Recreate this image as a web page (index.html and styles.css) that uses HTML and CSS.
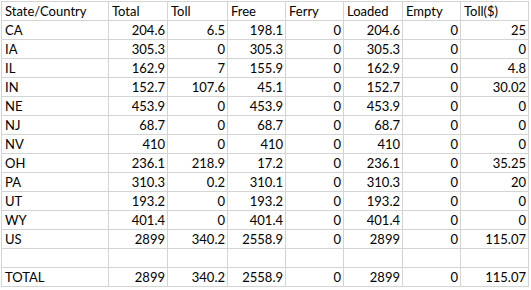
FILE: index.html
```html
<!DOCTYPE html>
<html lang="en">
<head>
  <meta charset="UTF-8">
  <title>Mileage by State</title>
  <link rel="stylesheet" href="styles.css">
</head>
<body>
  <table class="sheet">
    <colgroup>
      <col class="c-state">
      <col class="c-num">
      <col class="c-num2">
      <col class="c-num3">
      <col class="c-num3">
      <col class="c-num">
      <col class="c-num3">
      <col class="c-last">
    </colgroup>
    <thead>
      <tr>
        <th>State/Country</th>
        <th>Total</th>
        <th>Toll</th>
        <th>Free</th>
        <th>Ferry</th>
        <th>Loaded</th>
        <th>Empty</th>
        <th>Toll($)</th>
      </tr>
    </thead>
    <tbody>
      <tr><td>CA</td><td>204.6</td><td>6.5</td><td>198.1</td><td>0</td><td>204.6</td><td>0</td><td>25</td></tr>
      <tr><td>IA</td><td>305.3</td><td>0</td><td>305.3</td><td>0</td><td>305.3</td><td>0</td><td>0</td></tr>
      <tr><td>IL</td><td>162.9</td><td>7</td><td>155.9</td><td>0</td><td>162.9</td><td>0</td><td>4.8</td></tr>
      <tr><td>IN</td><td>152.7</td><td>107.6</td><td>45.1</td><td>0</td><td>152.7</td><td>0</td><td>30.02</td></tr>
      <tr><td>NE</td><td>453.9</td><td>0</td><td>453.9</td><td>0</td><td>453.9</td><td>0</td><td>0</td></tr>
      <tr><td>NJ</td><td>68.7</td><td>0</td><td>68.7</td><td>0</td><td>68.7</td><td>0</td><td>0</td></tr>
      <tr><td>NV</td><td>410</td><td>0</td><td>410</td><td>0</td><td>410</td><td>0</td><td>0</td></tr>
      <tr><td>OH</td><td>236.1</td><td>218.9</td><td>17.2</td><td>0</td><td>236.1</td><td>0</td><td>35.25</td></tr>
      <tr><td>PA</td><td>310.3</td><td>0.2</td><td>310.1</td><td>0</td><td>310.3</td><td>0</td><td>20</td></tr>
      <tr><td>UT</td><td>193.2</td><td>0</td><td>193.2</td><td>0</td><td>193.2</td><td>0</td><td>0</td></tr>
      <tr><td>WY</td><td>401.4</td><td>0</td><td>401.4</td><td>0</td><td>401.4</td><td>0</td><td>0</td></tr>
      <tr><td>US</td><td>2899</td><td>340.2</td><td>2558.9</td><td>0</td><td>2899</td><td>0</td><td>115.07</td></tr>
      <tr class="blank"><td></td><td></td><td></td><td></td><td></td><td></td><td></td><td></td></tr>
      <tr><td>TOTAL</td><td>2899</td><td>340.2</td><td>2558.9</td><td>0</td><td>2899</td><td>0</td><td>115.07</td></tr>
    </tbody>
  </table>
</body>
</html>
```

FILE: styles.css
```css
/* Sheet layout */
body {
  margin: 0;
  background: #fff;
  font-family: 'Lato', 'Liberation Sans', sans-serif;
  font-size: 13px;
  color: #000;
}

.sheet {
  margin: 1px 0 0 1px;
  width: 527px;
  table-layout: fixed;
  border-collapse: collapse;
  border: 1px solid #a0a0a0;
}

.c-state { width: 107px; }
.c-num   { width: 59px; }
.c-num2  { width: 60px; }
.c-num3  { width: 58px; }
.c-last  { width: 68px; }

/* Cells */
.sheet th,
.sheet td {
  height: 17px;
  padding: 0 2px 1px 3px;
  border: 1px solid #d4d4d4;
  vertical-align: bottom;
  white-space: nowrap;
  overflow: hidden;
  line-height: 15px;
}

.sheet th {
  font-weight: normal;
  text-align: left;
}

.sheet td {
  text-align: right;
}

.sheet td:first-child {
  text-align: left;
}
```
